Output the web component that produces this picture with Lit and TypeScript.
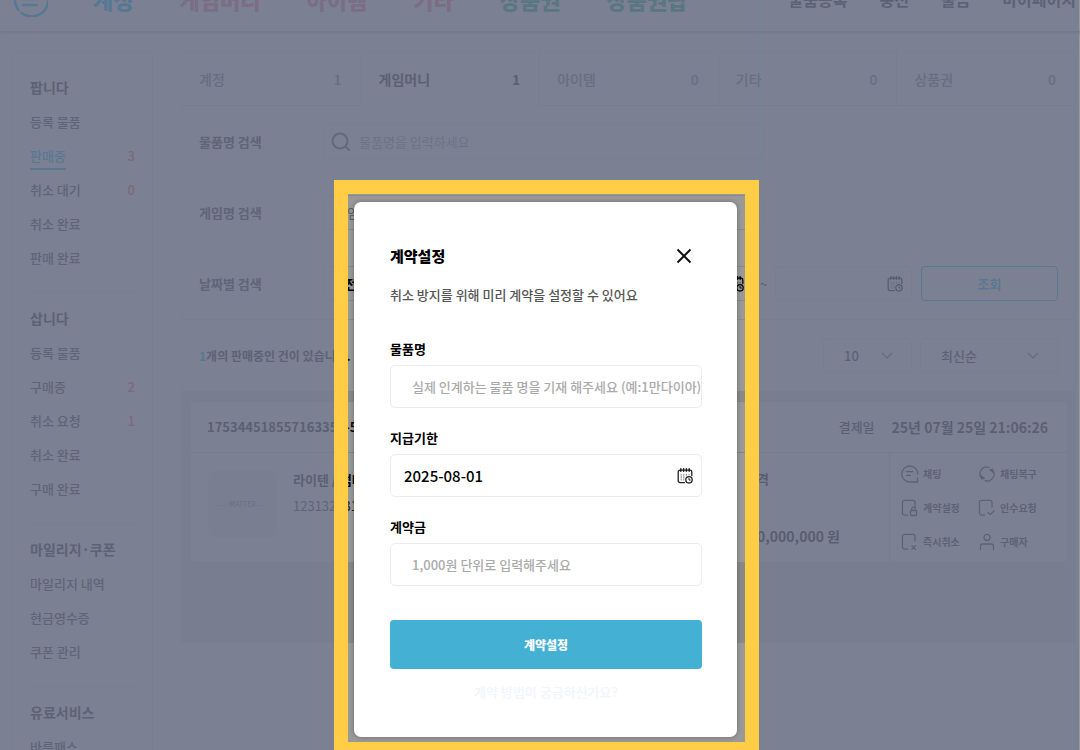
import { LitElement, html, css, svg } from "lit";
import { customElement } from "lit/decorators.js";
import { classMap } from "lit/directives/class-map.js";

interface MenuItem {
  label: string;
  count?: number;
  active?: boolean;
}

const MENU: { title: string; items: MenuItem[] }[] = [
  {
    title: "팝니다",
    items: [
      { label: "등록 물품" },
      { label: "판매중", count: 3, active: true },
      { label: "취소 대기", count: 0 },
      { label: "취소 완료" },
      { label: "판매 완료" },
    ],
  },
  {
    title: "삽니다",
    items: [
      { label: "등록 물품" },
      { label: "구매중", count: 2 },
      { label: "취소 요청", count: 1 },
      { label: "취소 완료" },
      { label: "구매 완료" },
    ],
  },
  {
    title: "마일리지·쿠폰",
    items: [{ label: "마일리지 내역" }, { label: "현금영수증" }, { label: "쿠폰 관리" }],
  },
  { title: "유료서비스", items: [{ label: "바른패스" }] },
];

const TABS = [
  { label: "계정", count: 1 },
  { label: "게임머니", count: 1, active: true },
  { label: "아이템", count: 0 },
  { label: "기타", count: 0 },
  { label: "상품권", count: 0 },
];

const calendarIcon = html`<svg class="cal" viewBox="0 0 16 16" aria-hidden="true">
  <path d="M7.5 14.6H3A1.8 1.8 0 0 1 1.200 12.800V4A1.800 1.800 0 0 1 3 2.200H13A1.800 1.800 0 0 1 14.800 4V7.500" />
  <path d="M3.800 .8V3.200M6.600 .8V3.200M9.400 .8V3.200M12.200 .8V3.200" stroke-width="1.500" />
  <path d="M4.200 6.200V12.500M6.800 6.200V12.500M9.400 6.200V8M12 6.200V7" stroke-width=".9" stroke-dasharray="1.200 1.200" opacity=".6" />
  <circle cx="12" cy="11.800" r="3.200" />
  <path d="M12 10.200V12H13.400" stroke-width="1" />
</svg>`;

const chevron = html`<svg class="chev" viewBox="0 0 12 8" aria-hidden="true"><path d="M1.500 1.500L6 6L10.500 1.500" /></svg>`;

const docPath = svg`<path d="M7.500 17.200H4.500A2 2 0 0 1 2.500 15.200V4.300A2 2 0 0 1 4.500 2.300H13A2 2 0 0 1 15 4.300V9" />`;

const ACTIONS = [
  {
    label: "채팅",
    icon: svg`<path d="M17.800 10A8 8 0 1 0 9.800 18H17.800L17.200 14" /><path d="M6.500 7.600H13M6.500 11.400H10.500" />`,
  },
  {
    label: "채팅복구",
    icon: svg`<path d="M12 3.400A6.800 6.800 0 0 0 4.600 14.200M8 16.600A6.800 6.800 0 0 0 15.400 5.800" /><path d="M3.600 11.600L4.600 14.800L7.400 14.200ZM16.400 8.400L15.400 5.200L12.800 5.800Z" fill="currentColor" />`,
  },
  {
    label: "계약설정",
    icon: svg`${docPath}<rect x="10.500" y="12.500" width="6" height="5" rx=".8" /><path d="M11.700 12.500V11A1.800 1.800 0 0 1 15.300 11V12.500" />`,
  },
  {
    label: "인수요청",
    icon: svg`${docPath}<path d="M11 14.600L13.200 16.600L17.400 12.400" />`,
  },
  {
    label: "즉시취소",
    icon: svg`${docPath}<path d="M11.800 13.600L15.600 17.400M15.600 13.600L11.800 17.400" />`,
  },
  {
    label: "구매자",
    icon: svg`<circle cx="10" cy="5.400" r="3" /><path d="M3.500 17.600V14.500A2.500 2.500 0 0 1 6 12H14A2.500 2.500 0 0 1 16.500 14.500V17.600" />`,
  },
];

@customElement("trade-header")
class TradeHeader extends LitElement {
  static styles = css`
    :host {
      display: block;
    }
    a {
      color: inherit;
      text-decoration: none;
    }
    .bar {
      display: flex;
      align-items: center;
      justify-content: space-between;
      height: 64px;
      padding: 0 4px 0 12px;
      box-shadow: 0 1px 4px #999;
    }
    .left,
    .cats,
    .links {
      display: flex;
      align-items: center;
      white-space: nowrap;
    }
    .left {
      gap: 45px;
    }
    .logo {
      width: 36px;
      height: 36px;
      fill: none;
      stroke: #00c0ff;
      stroke-width: 2.5;
      stroke-linecap: round;
    }
    .cats {
      gap: 46px;
      font-size: 22px;
      font-weight: 900;
    }
    .links {
      gap: 32px;
      font-size: 16px;
      font-weight: 700;
      color: #222;
    }
    .blue {
      color: #00c0ff;
    }
    .pink {
      color: #ff7898;
    }
    .green {
      color: #10b880;
    }
  `;

  render() {
    return html`<header class="bar">
      <div class="left">
        <svg class="logo" viewBox="0 0 36 36" aria-hidden="true">
          <path d="M6.500 29A16.500 16.500 0 1 1 9.500 32" />
          <path d="M11 12H25M11 18H25M11 24H25" />
        </svg>
        <nav class="cats">
          <a class="blue" href="#">계정</a>
          <a class="pink" href="#">게임머니</a>
          <a class="pink" href="#">아이템</a>
          <a class="pink" href="#">기타</a>
          <a class="green" href="#">상품권</a>
          <a class="green" href="#">상품권팝</a>
        </nav>
      </div>
      <nav class="links">
        <a href="#">물품등록</a><a href="#">충전</a><a href="#">출금</a><a href="#">마이페이지</a>
      </nav>
    </header>`;
  }
}

@customElement("side-menu")
class SideMenu extends LitElement {
  static styles = css`
    :host {
      display: block;
    }
    .menu {
      box-sizing: border-box;
      min-height: 100%;
      padding: 9px 17px 0;
      border: 1px solid #e8e8e8;
      border-radius: 5px;
    }
    .section {
      padding: 13px 0 24px;
    }
    .section + .section {
      border-top: 1px solid #e8e8e8;
    }
    h2 {
      margin: 0 0 13px;
      font-size: 14px;
      line-height: 24px;
      font-weight: 700;
      color: #222;
    }
    ul {
      display: grid;
      gap: 14px;
      margin: 0;
      padding: 0;
      list-style: none;
    }
    li {
      display: flex;
      justify-content: space-between;
      line-height: 20px;
      font-weight: 500;
      color: #333;
    }
    a {
      color: inherit;
      text-decoration: none;
    }
    .active {
      color: #00c0ff;
      text-decoration: underline 2px;
      text-underline-offset: 7px;
    }
    .count {
      color: #ff5050;
    }
  `;

  render() {
    return html`<aside class="menu">
      ${MENU.map(
        (s) => html`<section class="section">
          <h2>${s.title}</h2>
          <ul>
            ${s.items.map(
              (i) => html`<li>
                <a class=${classMap({ active: !!i.active })} href="#">${i.label}</a>
                ${i.count === undefined ? "" : html`<span class="count">${i.count}</span>`}
              </li>`
            )}
          </ul>
        </section>`
      )}
    </aside>`;
  }
}

@customElement("sales-panel")
class SalesPanel extends LitElement {
  static styles = css`
    :host {
      display: block;
      min-width: 0;
    }
    * {
      box-sizing: border-box;
    }
    button,
    input,
    select {
      font: inherit;
      color: inherit;
      background: none;
      border: 0;
      padding: 0;
      margin: 0;
      min-width: 0;
    }
    svg {
      fill: none;
      stroke: currentColor;
      stroke-width: 1.3;
      stroke-linecap: round;
      stroke-linejoin: round;
      flex: none;
    }
    .upper {
      border: 1px solid #ebebeb;
      border-bottom: 0;
    }
    .tabs {
      display: grid;
      grid-template-columns: repeat(5, 1fr);
      height: 53px;
    }
    .tabs .tab {
      display: flex;
      align-items: center;
      justify-content: space-between;
      padding: 0 19px 1px 17px;
      font-size: 14px;
      font-weight: 500;
      color: #777;
      background: #fafafa;
      border-bottom: 1px solid #e0e0e0;
    }
    .tabs .tab + .tab {
      border-left: 1px solid #e0e0e0;
    }
    .tabs .tab.on {
      color: #111;
      font-weight: 700;
      background: #fff;
      border-bottom-color: transparent;
    }
    .filters {
      display: grid;
      gap: 36px;
      padding: 18px 17px 18px;
      border-bottom: 1px solid #e8e8e8;
    }
    .row {
      display: grid;
      grid-template-columns: 124px 1fr;
      align-items: center;
    }
    .name {
      font-weight: 700;
      color: #333;
    }
    .field {
      display: flex;
      align-items: center;
      height: 35px;
      border: 1px solid #e4e4e4;
      border-radius: 4px;
    }
    .field input,
    .field select {
      flex: 1;
      width: 100%;
      height: 100%;
      appearance: none;
      outline: none;
    }
    .field input::placeholder {
      color: #999;
      opacity: 1;
    }
    .wide {
      width: 60%;
    }
    .search {
      padding-left: 7px;
      gap: 8px;
    }
    .search svg {
      width: 20px;
      height: 20px;
      color: #555;
      stroke-width: 2;
    }
    .game {
      padding-left: 11px;
    }
    .dates {
      display: grid;
      grid-template-columns: repeat(3, minmax(0, 1fr)) 4px repeat(2, minmax(0, 1fr));
      column-gap: 9px;
      align-items: center;
      color: #000;
      font-weight: 700;
    }
    .tilde {
      justify-self: center;
      font-weight: 400;
    }
    .pick {
      padding-left: 21px;
    }
    .date {
      padding-right: 8px;
    }
    .cal {
      width: 16px;
      height: 16px;
    }
    .find {
      height: 35px;
      border: 1px solid #00c0ff;
      border-radius: 4px;
      color: #00c0ff;
      font-size: 13px;
      font-weight: 700;
    }
    .dates .find {
      border: 1px solid #00c0ff;
      color: #00c0ff;
      font-weight: 700;
    }
    .summary {
      display: flex;
      align-items: center;
      justify-content: space-between;
      height: 71px;
      padding: 0 17px;
      font-size: 12px;
      font-weight: 700;
      color: #222;
    }
    .num {
      color: #00c0ff;
    }
    .sorts {
      display: flex;
      gap: 8px;
      font-size: 13px;
      font-weight: 500;
    }
    .sort {
      padding: 0 18px 0 20px;
      width: 138px;
    }
    .sort.small {
      width: 89px;
    }
    .chev {
      width: 12px;
      height: 8px;
      stroke-width: 1.6;
      color: #777;
    }
    .list {
      padding: 11px 9px 81px 10px;
      background: #e5e5e5;
    }
    .card {
      background: #fff;
      border-radius: 4px;
    }
    .head {
      display: flex;
      align-items: center;
      justify-content: space-between;
      height: 51px;
      padding: 0 19px 1px 16px;
      border-bottom: 1px solid #ddd;
      color: #111;
      font-weight: 700;
    }
    .paid {
      display: flex;
      gap: 17px;
      align-items: center;
    }
    .paid span {
      font-weight: 500;
    }
    .paid time {
      font-size: 14px;
    }
    .body {
      display: grid;
      grid-template-columns: 1fr 144px 178px;
      height: 109px;
    }
    .product {
      display: flex;
      gap: 16px;
      padding: 17px;
      white-space: nowrap;
      overflow: hidden;
    }
    .thumb {
      display: grid;
      place-items: center;
      flex: none;
      width: 69px;
      height: 68px;
      border-radius: 8px;
      background: #f2f2f2;
      color: #777;
      font-size: 7px;
    }
    .info {
      line-height: 20px;
    }
    .info p,
    .price p {
      margin: 0;
    }
    .info .title {
      font-weight: 700;
      color: #111;
    }
    .info .sub {
      margin-top: 6px;
      color: #333;
    }
    .price {
      display: flex;
      flex-direction: column;
      justify-content: space-between;
      padding: 16px 0;
      line-height: 20px;
      font-weight: 700;
    }
    .price p + p {
      width: 95px;
      font-size: 14px;
      text-align: right;
      white-space: nowrap;
    }
    .actions {
      display: grid;
      grid-template-columns: 77px 1fr;
      align-content: center;
      row-gap: 14px;
      padding: 0 10px;
      border-left: 1px solid #ddd;
    }
    .act {
      display: flex;
      align-items: center;
      gap: 3px;
      white-space: nowrap;
    }
    .actions .act {
      font-size: 10px;
      font-weight: 700;
      color: #222;
    }
    .act svg {
      width: 20px;
      height: 20px;
    }
  `;

  render() {
    return html`
      <div class="upper">
        <nav class="tabs">
          ${TABS.map(
            (t) => html`<button class=${classMap({ tab: true, on: !!t.active })}>
              <span>${t.label}</span><span>${t.count}</span>
            </button>`
          )}
        </nav>
        <form class="filters">
          <div class="row">
            <label class="name" for="item">물품명 검색</label>
            <div class="field wide search">
              <svg viewBox="0 0 20 20" aria-hidden="true"><circle cx="9" cy="9" r="7.500" /><path d="M14.500 14.500L18 18" /></svg>
              <input id="item" placeholder="물품명을 입력하세요" />
            </div>
          </div>
          <div class="row">
            <label class="name" for="game">게임명 검색</label>
            <div class="field wide game"><input id="game" placeholder="게임명을 입력하세요" /></div>
          </div>
          <div class="row">
            <label class="name" for="period">날짜별 검색</label>
            <div class="dates">
              <div class="field pick"><select id="period"><option>전체</option></select></div>
              <div class="field pick"><select aria-label="기준"><option>등록일</option></select></div>
              <div class="field date"><input aria-label="시작일" />${calendarIcon}</div>
              <span class="tilde">~</span>
              <div class="field date"><input aria-label="종료일" />${calendarIcon}</div>
              <button class="find" type="button">조회</button>
            </div>
          </div>
        </form>
        <div class="summary">
          <span><span class="num">1</span>개의 판매중인 건이 있습니다.</span>
          <div class="sorts">
            <div class="field sort small">
              <select aria-label="표시 개수"><option>10</option></select>${chevron}
            </div>
            <div class="field sort">
              <select aria-label="정렬"><option>최신순</option></select>${chevron}
            </div>
          </div>
        </div>
      </div>
      <div class="list">
        <article class="card">
          <div class="head">
            <span>175344518557163359-5</span>
            <div class="paid"><span>결제일</span><time>25년 07월 25일 21:06:26</time></div>
          </div>
          <div class="body">
            <div class="product">
              <div class="thumb">- - - MATTER - - -</div>
              <div class="info">
                <p class="title">라이텐 / 썸머</p>
                <p class="sub">1231321312</p>
              </div>
            </div>
            <div class="price">
              <p>가격</p>
              <p>10,000,000 원</p>
            </div>
            <div class="actions">
              ${ACTIONS.map(
                (a) => html`<button class="act">
                  <svg viewBox="0 0 20 20" aria-hidden="true">${a.icon}</svg>${a.label}
                </button>`
              )}
            </div>
          </div>
        </article>
      </div>
    `;
  }
}

@customElement("contract-dialog")
class ContractDialog extends LitElement {
  static styles = css`
    :host {
      display: block;
    }
    * {
      box-sizing: border-box;
    }
    .dialog {
      width: 383px;
      max-width: 100%;
      padding: 42px 35px 35px 36px;
      background: #fff;
      border-radius: 7px;
      box-shadow: 0 0 5px rgba(0, 0, 0, 0.3);
      color: #000;
    }
    .top {
      display: flex;
      align-items: center;
      justify-content: space-between;
      height: 24px;
      padding-right: 10px;
    }
    h1 {
      margin: 0;
      font-size: 15px;
      font-weight: 900;
      line-height: 24px;
    }
    button,
    input {
      font: inherit;
      border: 0;
      padding: 0;
      margin: 0;
      background: none;
    }
    .close {
      display: grid;
      place-items: center;
    }
    .close svg {
      width: 16px;
      height: 16px;
      fill: none;
      stroke: #111;
      stroke-width: 2;
    }
    .desc {
      margin: 17px 0 34px;
      line-height: 20px;
      color: #555;
      font-weight: 500;
    }
    .group + .group {
      margin-top: 20px;
    }
    label {
      display: block;
      margin-bottom: 6px;
      line-height: 20px;
      font-weight: 700;
    }
    .box {
      display: flex;
      align-items: center;
      height: 43px;
      padding-left: 21px;
      border: 1px solid #ececec;
      border-radius: 5px;
    }
    .box input {
      flex: 1;
      min-width: 0;
      height: 100%;
      outline: none;
    }
    .box input::placeholder {
      color: #aaa;
      font-weight: 500;
      opacity: 1;
    }
    .box.day {
      padding: 0 8px 0 13px;
      font-size: 15px;
      font-weight: 500;
    }
    .cal {
      width: 16px;
      height: 16px;
      fill: none;
      stroke: #222;
      stroke-width: 1.3;
      stroke-linecap: round;
    }
    .submit {
      display: block;
      width: 100%;
      height: 49px;
      margin-top: 34px;
      border-radius: 4px;
      background: #44b0d4;
      color: #fff;
      font-size: 12px;
      font-weight: 900;
    }
    .help {
      display: block;
      margin-top: 13px;
      line-height: 20px;
      text-align: center;
      text-decoration: none;
      font-weight: 500;
      color: #f1f5fc;
    }
  `;

  render() {
    return html`<div class="dialog" role="dialog" aria-labelledby="dialog-title">
      <div class="top">
        <h1 id="dialog-title">계약설정</h1>
        <button class="close" aria-label="닫기">
          <svg viewBox="0 0 16 16"><path d="M1.500 1.500L14.500 14.500M14.500 1.500L1.500 14.500" /></svg>
        </button>
      </div>
      <p class="desc">취소 방지를 위해 미리 계약을 설정할 수 있어요</p>
      <div class="group">
        <label for="goods">물품명</label>
        <div class="box"><input id="goods" placeholder="실제 인계하는 물품 명을 기재 해주세요 (예:1만다이아)" /></div>
      </div>
      <div class="group">
        <label for="due">지급기한</label>
        <div class="box day"><input id="due" .value=${"2025-08-01"} />${calendarIcon}</div>
      </div>
      <div class="group">
        <label for="deposit">계약금</label>
        <div class="box"><input id="deposit" placeholder="1,000원 단위로 입력해주세요" /></div>
      </div>
      <button class="submit">계약설정</button>
      <a class="help" href="#">계약 방법이 궁금하신가요?</a>
    </div>`;
  }
}

@customElement("app-root")
class AppRoot extends LitElement {
  static styles = css`
    :host {
      display: block;
      position: relative;
      height: 100vh;
      overflow: hidden;
      background: #fff;
      font: 13px/20px "Noto Sans CJK KR", "Noto Sans", sans-serif;
    }
    /* The page is scrolled halfway past its header. */
    .page {
      margin-top: -33px;
    }
    .main {
      display: grid;
      grid-template-columns: 141px minmax(0, 1fr);
      gap: 28px;
      padding: 21px 4px 0 12px;
    }
    .dim,
    .tour {
      position: absolute;
      inset: 0;
    }
    .dim {
      background: rgba(0, 0, 0, 0.4);
    }
    .tour {
      right: 1px;
      display: flex;
      align-items: flex-start;
      justify-content: center;
      padding: 180px 0 0 14px;
      overflow: hidden;
    }
    .spot {
      position: relative;
      padding: 8px 8px 5px 6px;
      border: 14px solid #ffcd46;
      box-shadow: 0 0 0 2000px rgba(114, 121, 144, 0.77);
    }
    /* Hairline running up from the frame's right edge. */
    .spot::after {
      content: "";
      position: absolute;
      right: -15px;
      bottom: calc(100% + 14px);
      width: 1px;
      height: 100vh;
      background: rgba(90, 140, 155, 0.4);
    }
  `;

  render() {
    return html`
      <div class="page">
        <trade-header></trade-header>
        <main class="main">
          <side-menu></side-menu>
          <sales-panel></sales-panel>
        </main>
      </div>
      <div class="dim"></div>
      <div class="tour">
        <div class="spot"><contract-dialog></contract-dialog></div>
      </div>
    `;
  }
}
